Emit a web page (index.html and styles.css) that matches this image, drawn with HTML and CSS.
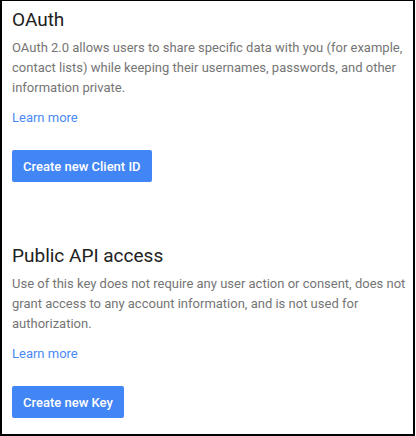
FILE: index.html
```html
<!DOCTYPE html>
<html>
<head>
<meta charset="utf-8">
<link rel="stylesheet" href="styles.css">
</head>
<body>
<div class="panel">
  <section class="block">
    <h2 class="title">OAuth</h2>
    <p class="desc">OAuth 2.0 allows users to share specific data with you (for example, contact lists) while keeping their usernames, passwords, and other information private.</p>
    <a class="link" href="#">Learn more</a>
    <button class="btn">Create new Client ID</button>
  </section>
  <section class="block second">
    <h2 class="title">Public API access</h2>
    <p class="desc">Use of this key does not require any user action or consent, does not grant access to any account information, and is not used for authorization.</p>
    <a class="link" href="#">Learn more</a>
    <button class="btn">Create new Key</button>
  </section>
</div>
</body>
</html>
```
FILE: styles.css
```css
html, body {
  margin: 0;
  padding: 0;
  background: #fff;
}
body {
  font-family: Roboto, "Noto Sans", sans-serif;
}
.panel {
  box-sizing: border-box;
  width: 415px;
  height: 436px;
  border-top: 1px solid #000;
  border-left: 2px solid #000;
  border-right: 2px solid #000;
  border-bottom: 2px solid #000;
  padding: 7px 6px 0 10px;
}
.block {
  display: flex;
  flex-direction: column;
  align-items: flex-start;
}
.second {
  margin-top: 62px;
}
.title {
  margin: 0;
  font-size: 19px;
  line-height: 24px;
  font-weight: 400;
  color: #212121;
}
.desc {
  margin: 6px 0 0;
  font-size: 13px;
  line-height: 20px;
  color: #757575;
}
.link {
  margin-top: 10px;
  font-size: 13px;
  line-height: 20px;
  color: #4a8af4;
  text-decoration: none;
}
.btn {
  margin-top: 22px;
  height: 32px;
  padding: 0 11px;
  border: none;
  border-radius: 2px;
  background: #4285f4;
  color: #fff;
  font-family: Roboto, "Noto Sans", sans-serif;
  font-size: 13px;
  font-weight: 500;
}
```
